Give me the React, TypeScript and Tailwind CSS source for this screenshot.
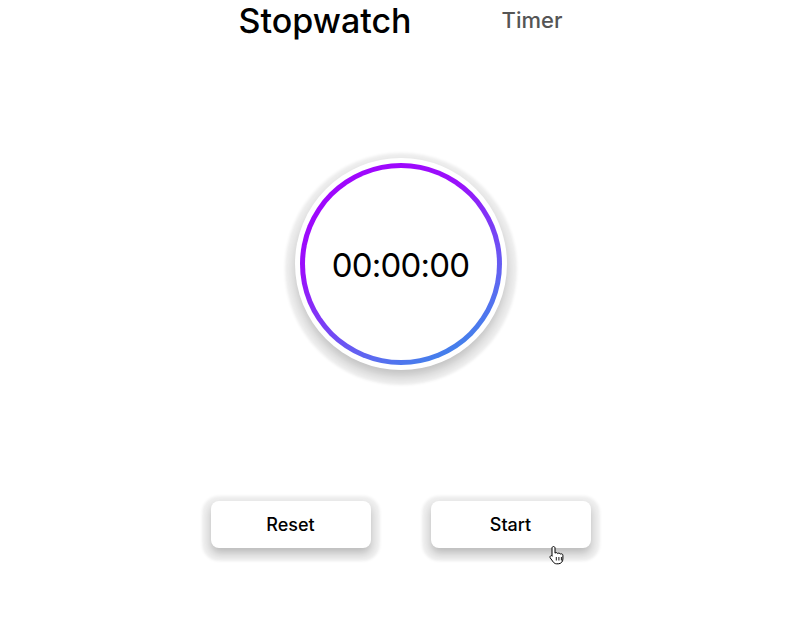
import { useState } from 'react';

const HandCursor = () => (
  <svg width="16" height="20" viewBox="0 0 16 20" className="absolute left-[118px] top-[44px]">
    <path
      d="M4.5 1.5c.8 0 1.5.7 1.5 1.5v5.2c.3-.4.8-.6 1.3-.6.7 0 1.2.4 1.4 1 .3-.3.7-.5 1.2-.5.7 0 1.2.4 1.4 1 .3-.2.6-.3 1-.3.9 0 1.6.7 1.6 1.6v3.6c0 2.7-2 4.8-4.6 4.8H7.6c-1.3 0-2.4-.6-3.2-1.6L1.3 13c-.5-.7-.4-1.6.3-2.1.6-.4 1.4-.3 1.9.2l-.5-.5V3c0-.8.7-1.5 1.5-1.5z"
      fill="#fff"
      stroke="#000"
      strokeWidth="1"
    />
    <path d="M7.3 12v3.5M9.9 12v3.5M12.4 12v3.5" stroke="#000" strokeWidth="0.9" />
  </svg>
);

const Button = ({ label, children }: { label: string; children?: React.ReactNode }) => (
  <button className="relative flex h-[47px] w-[160px] items-center justify-center rounded-[8px] bg-white text-[18px] font-medium text-black shadow-[0_4px_3px_9px_rgba(0,0,0,0.065),0_5px_8px_rgba(0,0,0,0.22)]">
    {label}
    {children}
  </button>
);

export default function App() {
  const [time] = useState('00:00:00');

  return (
    <div className="flex h-[632px] w-[806px] flex-col items-center bg-white pr-[5px] font-['Inter',sans-serif]">
      <nav className="flex items-start gap-[90px] pt-[4px]">
        <h1 className="text-[34px] font-medium leading-[34px] text-black">Stopwatch</h1>
        <span className="mt-[5px] text-[22px] font-medium leading-[22px] text-[#555]">Timer</span>
      </nav>

      <div className="mt-[120px] rounded-full bg-white p-[5px] shadow-[0_5px_3px_10px_rgba(0,0,0,0.07),0_6px_10px_rgba(0,0,0,0.18)]">
        <div className="rounded-full bg-[linear-gradient(150deg,#a200ff_0%,#9a10fb_35%,#5a6cf0_75%,#2a96e6_100%)] p-[5px]">
          <div className="flex h-[192px] w-[192px] items-center justify-center rounded-full bg-white pt-[4px]">
            <span className="text-[33px] font-normal tracking-[-0.8px] text-black">{time}</span>
          </div>
        </div>
      </div>

      <div className="mt-[131px] flex gap-[60px]">
        <Button label="Reset" />
        <Button label="Start">
          <HandCursor />
        </Button>
      </div>
    </div>
  );
}
